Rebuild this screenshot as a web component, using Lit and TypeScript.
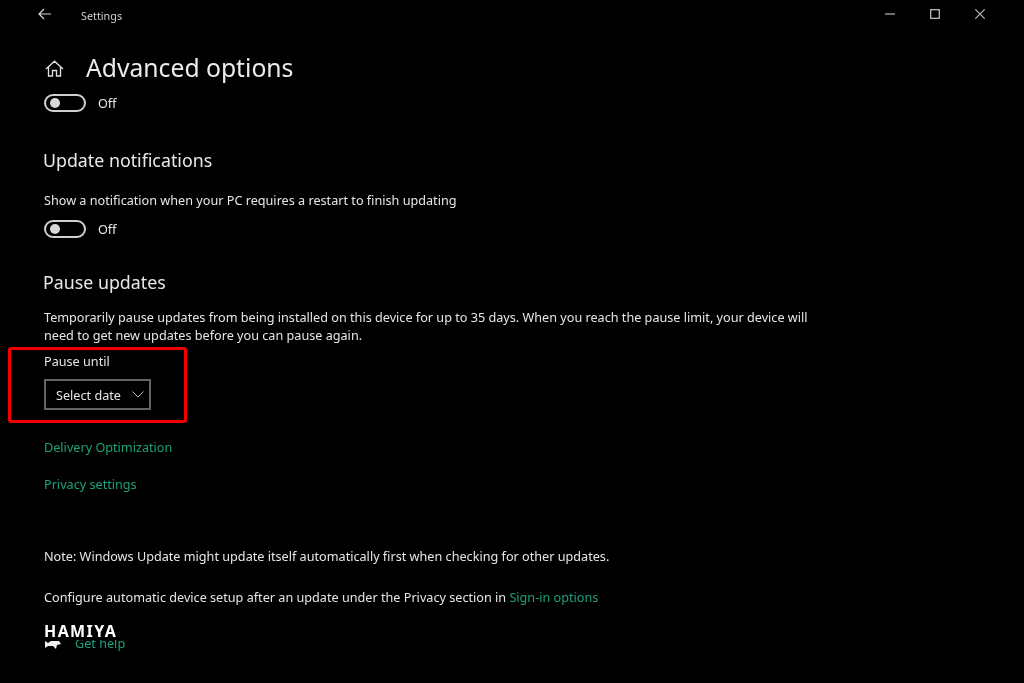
import { LitElement, html, css } from "lit";
import { customElement } from "lit/decorators.js";

@customElement("app-root")
export class AppRoot extends LitElement {
  static styles = css`
    :host { display: block; width: 1024px; height: 683px; background: #000; color: #e6e6e6; font-family: "Noto Sans", "Open Sans", sans-serif; font-size: 12.65px; position: relative; overflow: hidden; }
    .page { height: 100%; filter: blur(0.35px); }
    .bar { display: flex; align-items: center; height: 28px; padding-left: 38px; }
    .bar .title { margin-left: 30px; font-size: 10.8px; color: #d0d0d0; padding-top: 2px; }
    .win { margin-left: auto; display: flex; gap: 35px; padding-right: 39px; align-items: center; }
    svg { display: block; }
    .head { display: flex; align-items: center; margin-top: 22px; padding-left: 45px; height: 36px; }
    .head h1 { font-weight: 400; font-size: 24.7px; margin: 0 0 0 22px; color: #ececec; line-height: 36px; }
    .main { padding-left: 44px; padding-top: 7px; width: 772px; }
    .toggle { display: flex; align-items: center; gap: 12px; height: 20px; }
    .sw { width: 42px; height: 18px; box-sizing: border-box; border: 2px solid #d0d0d0; border-radius: 9px; display: flex; align-items: center; padding-left: 4px; }
    .knob { width: 10px; height: 10px; border-radius: 50%; background: #d8d8d8; }
    h2 { font-weight: 400; font-size: 17.8px; line-height: 24px; margin: 0 0 0 -1px; color: #e8e8e8; }
    p { margin: 0; line-height: 18px; }
    .green { color: #1ea07c; }
    .select { width: 107px; height: 31px; box-sizing: border-box; border: 2px solid #646464; display: flex; align-items: center; padding-left: 10px; gap: 11px; margin-top: 9px; }
    .outline { position: absolute; left: 8px; top: 347px; width: 179px; height: 76px; box-sizing: border-box; border: 3px solid #f00000; border-radius: 3px; }
    .mark { position: absolute; left: 44px; top: 623px; width: 90px; height: 17px; font-size: 16px; font-weight: 700; letter-spacing: 1.4px; color: #fff; line-height: 16px; background: #000; }
    .fish { position: absolute; left: 45px; top: 640px; }
    .mt-h1 { margin-top: 35px; }
    .mt-show { margin-top: 19px; }
    .mt-tog { margin-top: 10px; }
    .mt-h2 { margin-top: 31px; }
    .mt-temp { margin-top: 14px; }
    .mt-until { margin-top: 8px; }
    .mt-del { margin-top: 28px; }
    .mt-priv { margin-top: 19px; }
    .mt-note { margin-top: 54px; }
    .mt-conf { margin-top: 23px; }
    .help { margin-top: 28px; margin-left: 31px; }
  `;

  toggle() {
    return html`<div class="toggle"><div class="sw"><div class="knob"></div></div><span>Off</span></div>`;
  }

  render() {
    return html`
      <div class="page">
      <div class="bar">
        <svg width="13" height="12" viewBox="0 0 13 12" fill="none" stroke="#d8d8d8" stroke-width="1.2"><path d="M13 6H1M6 1 1 6l5 5"/></svg>
        <span class="title">Settings</span>
        <div class="win">
          <svg width="10" height="10" viewBox="0 0 10 10" fill="none" stroke="#b8b8b8" stroke-width="1.2"><path d="M0 5h10"/></svg>
          <svg width="10" height="10" viewBox="0 0 10 10" fill="none" stroke="#b8b8b8" stroke-width="1.3"><rect x=".7" y=".7" width="8.6" height="8.6"/></svg>
          <svg width="10" height="10" viewBox="0 0 10 10" fill="none" stroke="#b8b8b8" stroke-width="1.2"><path d="M.3.3l9.400 9.400M9.700.3l-9.400 9.400"/></svg>
        </div>
      </div>
      <div class="head">
        <svg width="19" height="17" viewBox="0 0 19 17" fill="none" stroke="#e0e0e0" stroke-width="1.3"><path d="M1 9 9.500 1.200 18 9M3.500 7v9h4v-5.500h4V16h4V7"/></svg>
        <h1>Advanced options</h1>
      </div>
      <div class="main">
        ${this.toggle()}
        <h2 class="mt-h1">Update notifications</h2>
        <p class="mt-show">Show a notification when your PC requires a restart to finish updating</p>
        <div class="mt-tog">${this.toggle()}</div>
        <h2 class="mt-h2">Pause updates</h2>
        <p class="mt-temp">Temporarily pause updates from being installed on this device for up to 35 days. When you reach the pause limit, your device will need to get new updates before you can pause again.</p>
        <p class="mt-until">Pause until</p>
        <div class="select"><span>Select date</span>
          <svg width="12" height="7" viewBox="0 0 12 7" fill="none" stroke="#b8b8b8" stroke-width="1"><path d="M.5.5 6 6l5.500-5.500"/></svg>
        </div>
        <p class="green mt-del">Delivery Optimization</p>
        <p class="green mt-priv">Privacy settings</p>
        <p class="mt-note">Note: Windows Update might update itself automatically first when checking for other updates.</p>
        <p class="mt-conf">Configure automatic device setup after an update under the Privacy section in <span class="green">Sign-in options</span></p>
        <p class="green help">Get help</p>
      </div>
      <div class="outline"></div>
      <div class="mark">HAMIYA</div>
      <svg class="fish" width="17" height="10" viewBox="0 0 17 10" fill="#f0f0f0"><path d="M0 1l3 2 3-2h8l2 3-4 1-1 4-3-3H3L0 8z"/></svg>
      </div>
    `;
  }
}
